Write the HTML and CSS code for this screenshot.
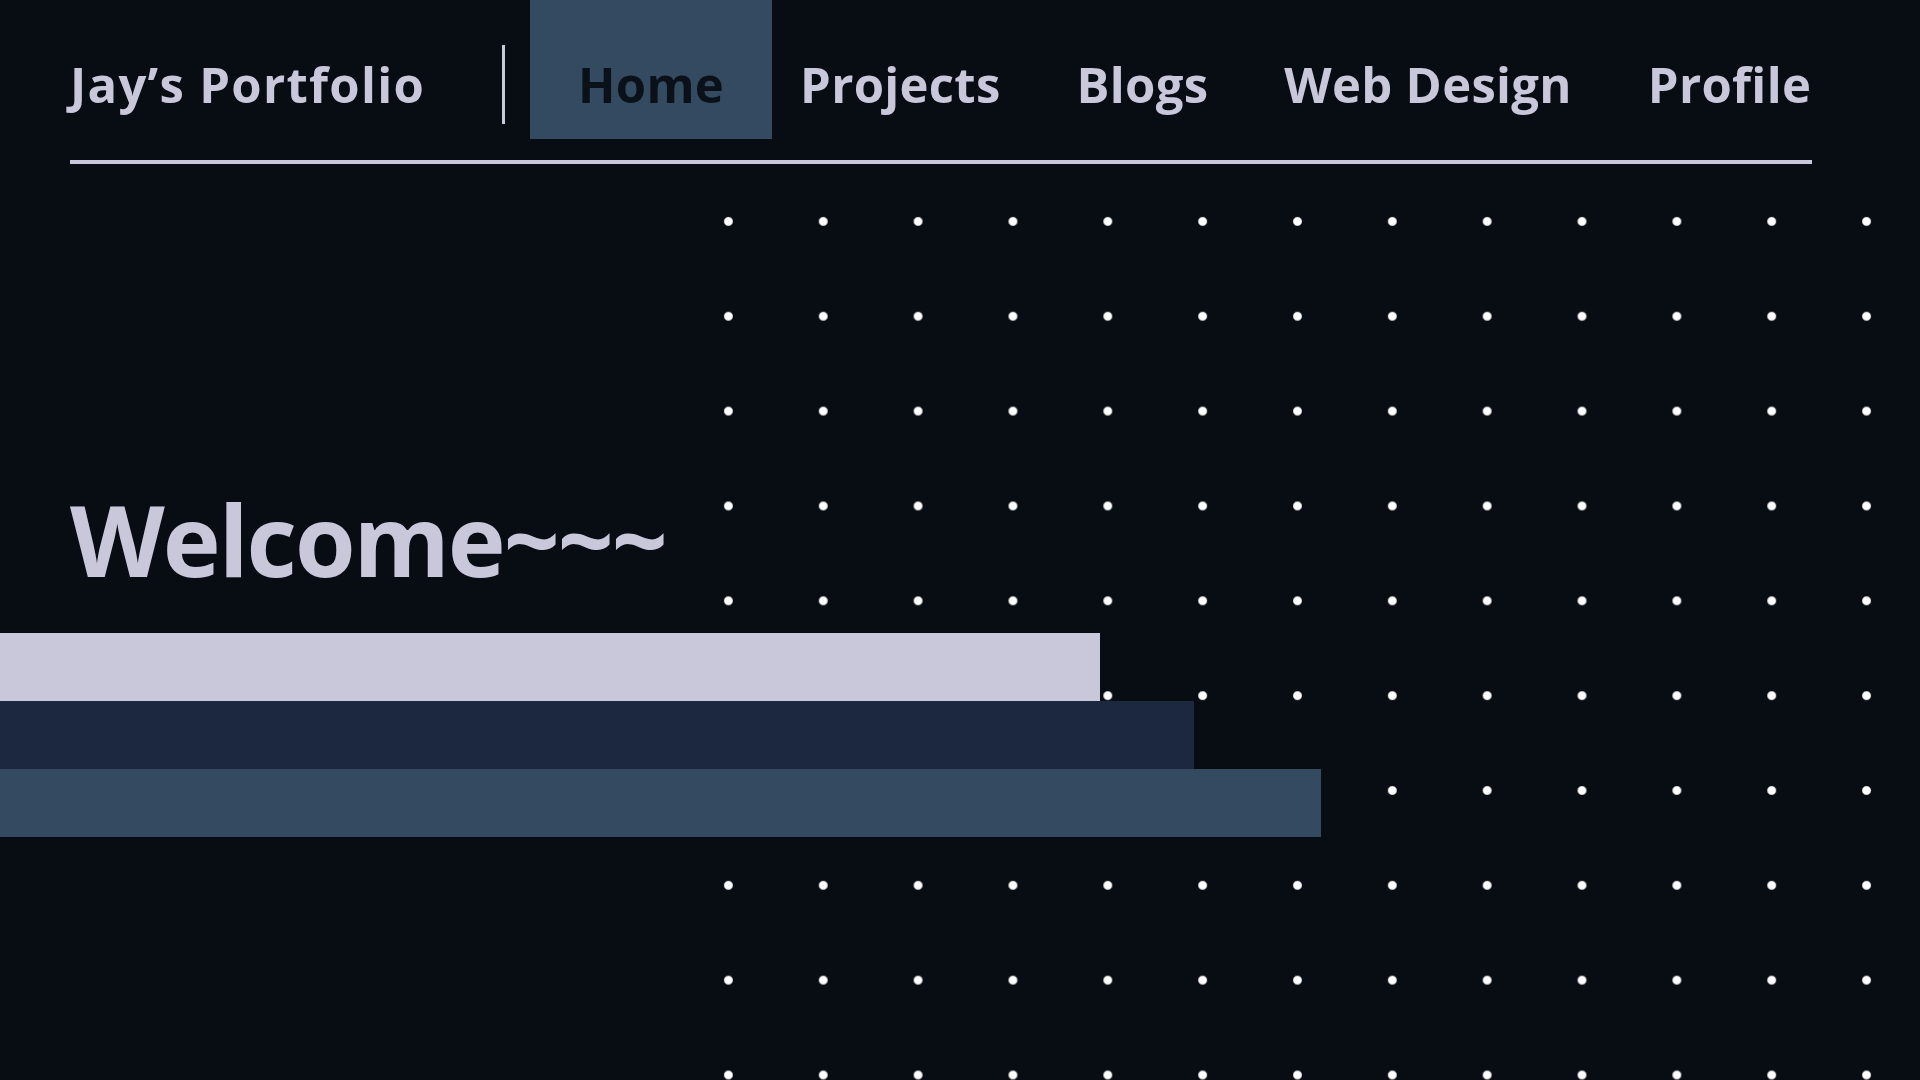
FILE: index.html
```html
<!DOCTYPE html>
<html lang="en">
<head>
<meta charset="utf-8">
<title>Jay's Portfolio</title>
<link rel="stylesheet" href="styles.css">
</head>
<body>
<div class="dots" aria-hidden="true"></div>
<header class="header">
  <div class="logo">Jay’s Portfolio</div>
  <div class="divider"></div>
  <nav class="nav">
    <a class="nav-item active" href="#">Home</a>
    <a class="nav-item" href="#">Projects</a>
    <a class="nav-item" href="#">Blogs</a>
    <a class="nav-item" href="#">Web Design</a>
    <a class="nav-item" href="#">Profile</a>
  </nav>
</header>
<div class="rule"></div>
<main class="hero">
  <h1 class="welcome">Welcome~~~</h1>
  <div class="bars">
    <div class="bar bar-1"></div>
    <div class="bar bar-2"></div>
    <div class="bar bar-3"></div>
  </div>
</main>
</body>
</html>
```
FILE: styles.css
```css
* { box-sizing: border-box; }
html, body {
  margin: 0;
  padding: 0;
  width: 1920px;
  height: 1080px;
  overflow: hidden;
  background: #080d14;
  font-family: "Open Sans", "Noto Sans", sans-serif;
  color: #c9c8db;
}
body { position: relative; }

.dots {
  position: absolute;
  left: 681px;
  top: 174px;
  right: 0;
  bottom: 0;
  background-image: radial-gradient(circle, #ffffff 0, #ffffff 3.8px, rgba(255,255,255,0) 5px);
  background-size: 94.85px 94.85px;
  background-position: 0 0;
  z-index: 0;
}

.header {
  position: relative;
  z-index: 1;
  display: flex;
  align-items: flex-start;
  height: 139px;
  padding-left: 70px;
}
.logo {
  flex: none;
  width: 354px;
  font-size: 49px;
  font-weight: 700;
  line-height: 49px;
  letter-spacing: 1.3px;
  padding-top: 60px;
  white-space: nowrap;
}
.divider {
  flex: none;
  width: 3px;
  height: 79px;
  margin: 45px 35px 0 78px;
  background: #c9c8db;
}
.nav {
  display: flex;
  height: 139px;
}
.nav-item {
  display: block;
  height: 139px;
  padding: 60px 38px 0;
  font-size: 49px;
  font-weight: 700;
  line-height: 49px;
  letter-spacing: 0.3px;
  color: #c9c8db;
  text-decoration: none;
  white-space: nowrap;
}
.nav-item.active {
  background: #344a61;
  color: #0a1119;
  padding-left: 48px;
  padding-right: 48px;
  margin: 0 -10px;
}

.rule {
  position: relative;
  z-index: 1;
  height: 4px;
  width: 1742px;
  margin: 21px 0 0 70px;
  background: #c9c8db;
}

.hero { position: relative; z-index: 1; }
.welcome {
  margin: 316px 0 0 70px;
  font-size: 98px;
  font-weight: 700;
  line-height: 118px;
  letter-spacing: -2px;
  color: #c9c8db;
}
.bars {
  margin-top: 35px;
  display: flex;
  flex-direction: column;
}
.bar { height: 68px; }
.bar-1 { width: 1100px; background: #c9c8db; }
.bar-2 { width: 1194px; background: #1b2840; }
.bar-3 { width: 1321px; background: #344a61; }
```
